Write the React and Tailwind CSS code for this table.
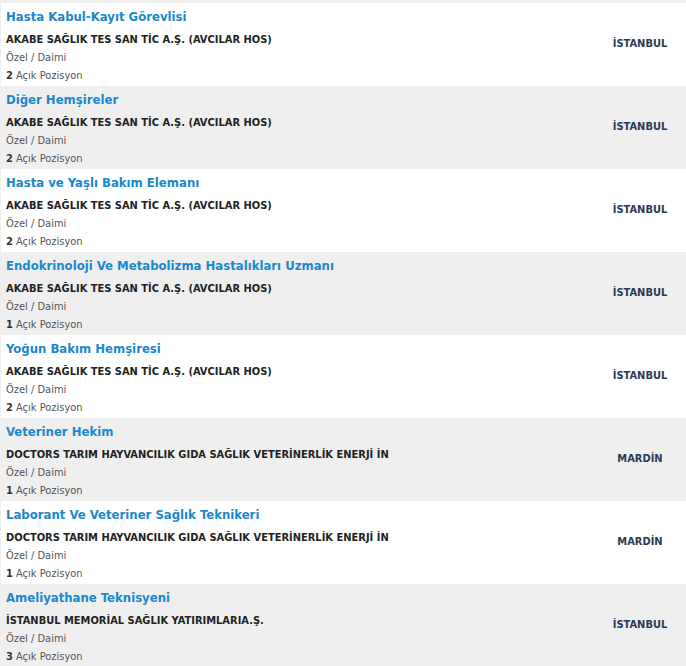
const jobs = [
  { title: "Hasta Kabul-Kayıt Görevlisi", company: "AKABE SAĞLIK TES SAN TİC A.Ş. (AVCILAR HOS)", type: "Özel / Daimi", count: 2, city: "İSTANBUL" },
  { title: "Diğer Hemşireler", company: "AKABE SAĞLIK TES SAN TİC A.Ş. (AVCILAR HOS)", type: "Özel / Daimi", count: 2, city: "İSTANBUL" },
  { title: "Hasta ve Yaşlı Bakım Elemanı", company: "AKABE SAĞLIK TES SAN TİC A.Ş. (AVCILAR HOS)", type: "Özel / Daimi", count: 2, city: "İSTANBUL" },
  { title: "Endokrinoloji Ve Metabolizma Hastalıkları Uzmanı", company: "AKABE SAĞLIK TES SAN TİC A.Ş. (AVCILAR HOS)", type: "Özel / Daimi", count: 1, city: "İSTANBUL" },
  { title: "Yoğun Bakım Hemşiresi", company: "AKABE SAĞLIK TES SAN TİC A.Ş. (AVCILAR HOS)", type: "Özel / Daimi", count: 2, city: "İSTANBUL" },
  { title: "Veteriner Hekim", company: "DOCTORS TARIM HAYVANCILIK GIDA SAĞLIK VETERİNERLİK ENERJİ İN", type: "Özel / Daimi", count: 1, city: "MARDİN" },
  { title: "Laborant Ve Veteriner Sağlık Teknikeri", company: "DOCTORS TARIM HAYVANCILIK GIDA SAĞLIK VETERİNERLİK ENERJİ İN", type: "Özel / Daimi", count: 1, city: "MARDİN" },
  { title: "Ameliyathane Teknisyeni", company: "İSTANBUL MEMORİAL SAĞLIK YATIRIMLARIA.Ş.", type: "Özel / Daimi", count: 3, city: "İSTANBUL" },
];

const JobRow = ({ job, odd }) => {
  return (
    <div className={`flex h-[83px] ${odd ? "bg-[#efefef]" : "bg-white"}`}>
      <div className="flex-1 pl-[5px] pt-[5px]">
        <div className="text-[13px] leading-[18px] font-bold text-[#1a88cc]">{job.title}</div>
        <div className="mt-[5px] text-[11px] leading-[18px] font-bold text-[#222]">{job.company}</div>
        <div className="text-[11px] leading-[18px] text-[#555]">{job.type}</div>
        <div className="text-[11px] leading-[18px] text-[#555]">
          <span className="font-bold text-[#333]">{job.count}</span> Açık Pozisyon
        </div>
      </div>
      <div className="w-[92px] flex items-center justify-center text-[11px] font-bold text-[#2b3a55]">
        {job.city}
      </div>
    </div>
  );
};

export default function App() {
  return (
    <div className="w-[686px] h-[666px] overflow-hidden bg-white font-['DejaVu_Sans_Condensed','DejaVu_Sans',sans-serif]">
      <div className="h-[3px] bg-[#efefef]" />
      <div className="border-l border-[#efefef]">
        {jobs.map((job, i) => (
          <JobRow key={i} job={job} odd={i % 2 === 1} />
        ))}
      </div>
    </div>
  );
}
